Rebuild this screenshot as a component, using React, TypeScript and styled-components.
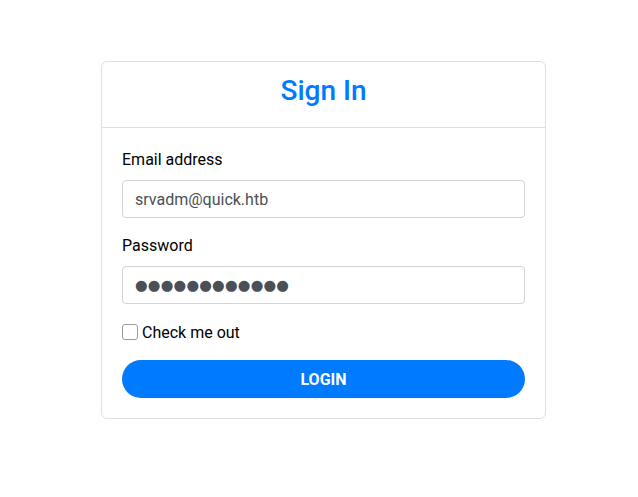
import React from "react";
import styled, { createGlobalStyle } from "styled-components";

const GlobalStyle = createGlobalStyle`
  html, body { margin: 0; padding: 0; background: #ffffff; }
  body { font-family: Roboto, "Liberation Sans", sans-serif; color: #212529; }
  * { box-sizing: border-box; }
`;

const Page = styled.div`
  padding: 61px 0 0 101px;
`;

const Card = styled.div`
  width: 445px;
  border: 1px solid #dfdfdf;
  border-radius: 6px;
  background: #fff;
  display: flex;
  flex-direction: column;
`;

const Header = styled.div`
  padding: 12px 20px;
  border-bottom: 1px solid #dfdfdf;
  text-align: center;
`;

const Title = styled.h3`
  margin: 0 0 8px;
  font-size: 28px;
  font-weight: 500;
  line-height: 33px;
  color: #007bff;
`;

const Body = styled.form`
  padding: 20px;
  display: flex;
  flex-direction: column;
  gap: 16px;
`;

const Group = styled.div`
  display: flex;
  flex-direction: column;
  gap: 8px;
`;

const Label = styled.label`
  font-size: 16px;
  line-height: 24px;
  color: #000;
`;

const Input = styled.input<{ $masked?: boolean }>`
  height: 38px;
  width: 100%;
  padding: 6px 12px;
  font-family: ${(p) => (p.$masked ? '"DejaVu Sans", sans-serif' : 'Roboto, "Liberation Sans", sans-serif')};
  font-size: ${(p) => (p.$masked ? "14.5px" : "16px")};
  letter-spacing: ${(p) => (p.$masked ? "0.2px" : "0")};
  line-height: 24px;
  color: #495057;
  border: 1px solid #ced4da;
  border-radius: 4px;
  outline: none;
  background: #fff;
`;

const CheckRow = styled.label`
  display: flex;
  align-items: center;
  gap: 4px;
  height: 24px;
  font-size: 16px;
  color: #000;
`;

const Box = styled.span`
  width: 16px;
  height: 16px;
  border: 1px solid #9a9a9a;
  border-radius: 3px;
  background: #fff;
  display: inline-block;
`;

const Button = styled.button`
  height: 38px;
  width: 100%;
  border: none;
  border-radius: 19px;
  background: #007bff;
  color: #fff;
  font-family: Roboto, "Liberation Sans", sans-serif;
  font-size: 16px;
  font-weight: 700;
  letter-spacing: 0;
  cursor: pointer;
`;

export default function App() {
  return (
    <>
      <GlobalStyle />
      <Page>
        <Card>
          <Header>
            <Title>Sign In</Title>
          </Header>
          <Body onSubmit={(e) => e.preventDefault()}>
            <Group>
              <Label htmlFor="email">Email address</Label>
              <Input id="email" type="text" defaultValue="srvadm@quick.htb" />
            </Group>
            <Group>
              <Label htmlFor="pw">Password</Label>
              <Input id="pw" $masked type="text" defaultValue="●●●●●●●●●●●●" />
            </Group>
            <CheckRow>
              <Box />
              Check me out
            </CheckRow>
            <Button type="submit">LOGIN</Button>
          </Body>
        </Card>
      </Page>
    </>
  );
}
